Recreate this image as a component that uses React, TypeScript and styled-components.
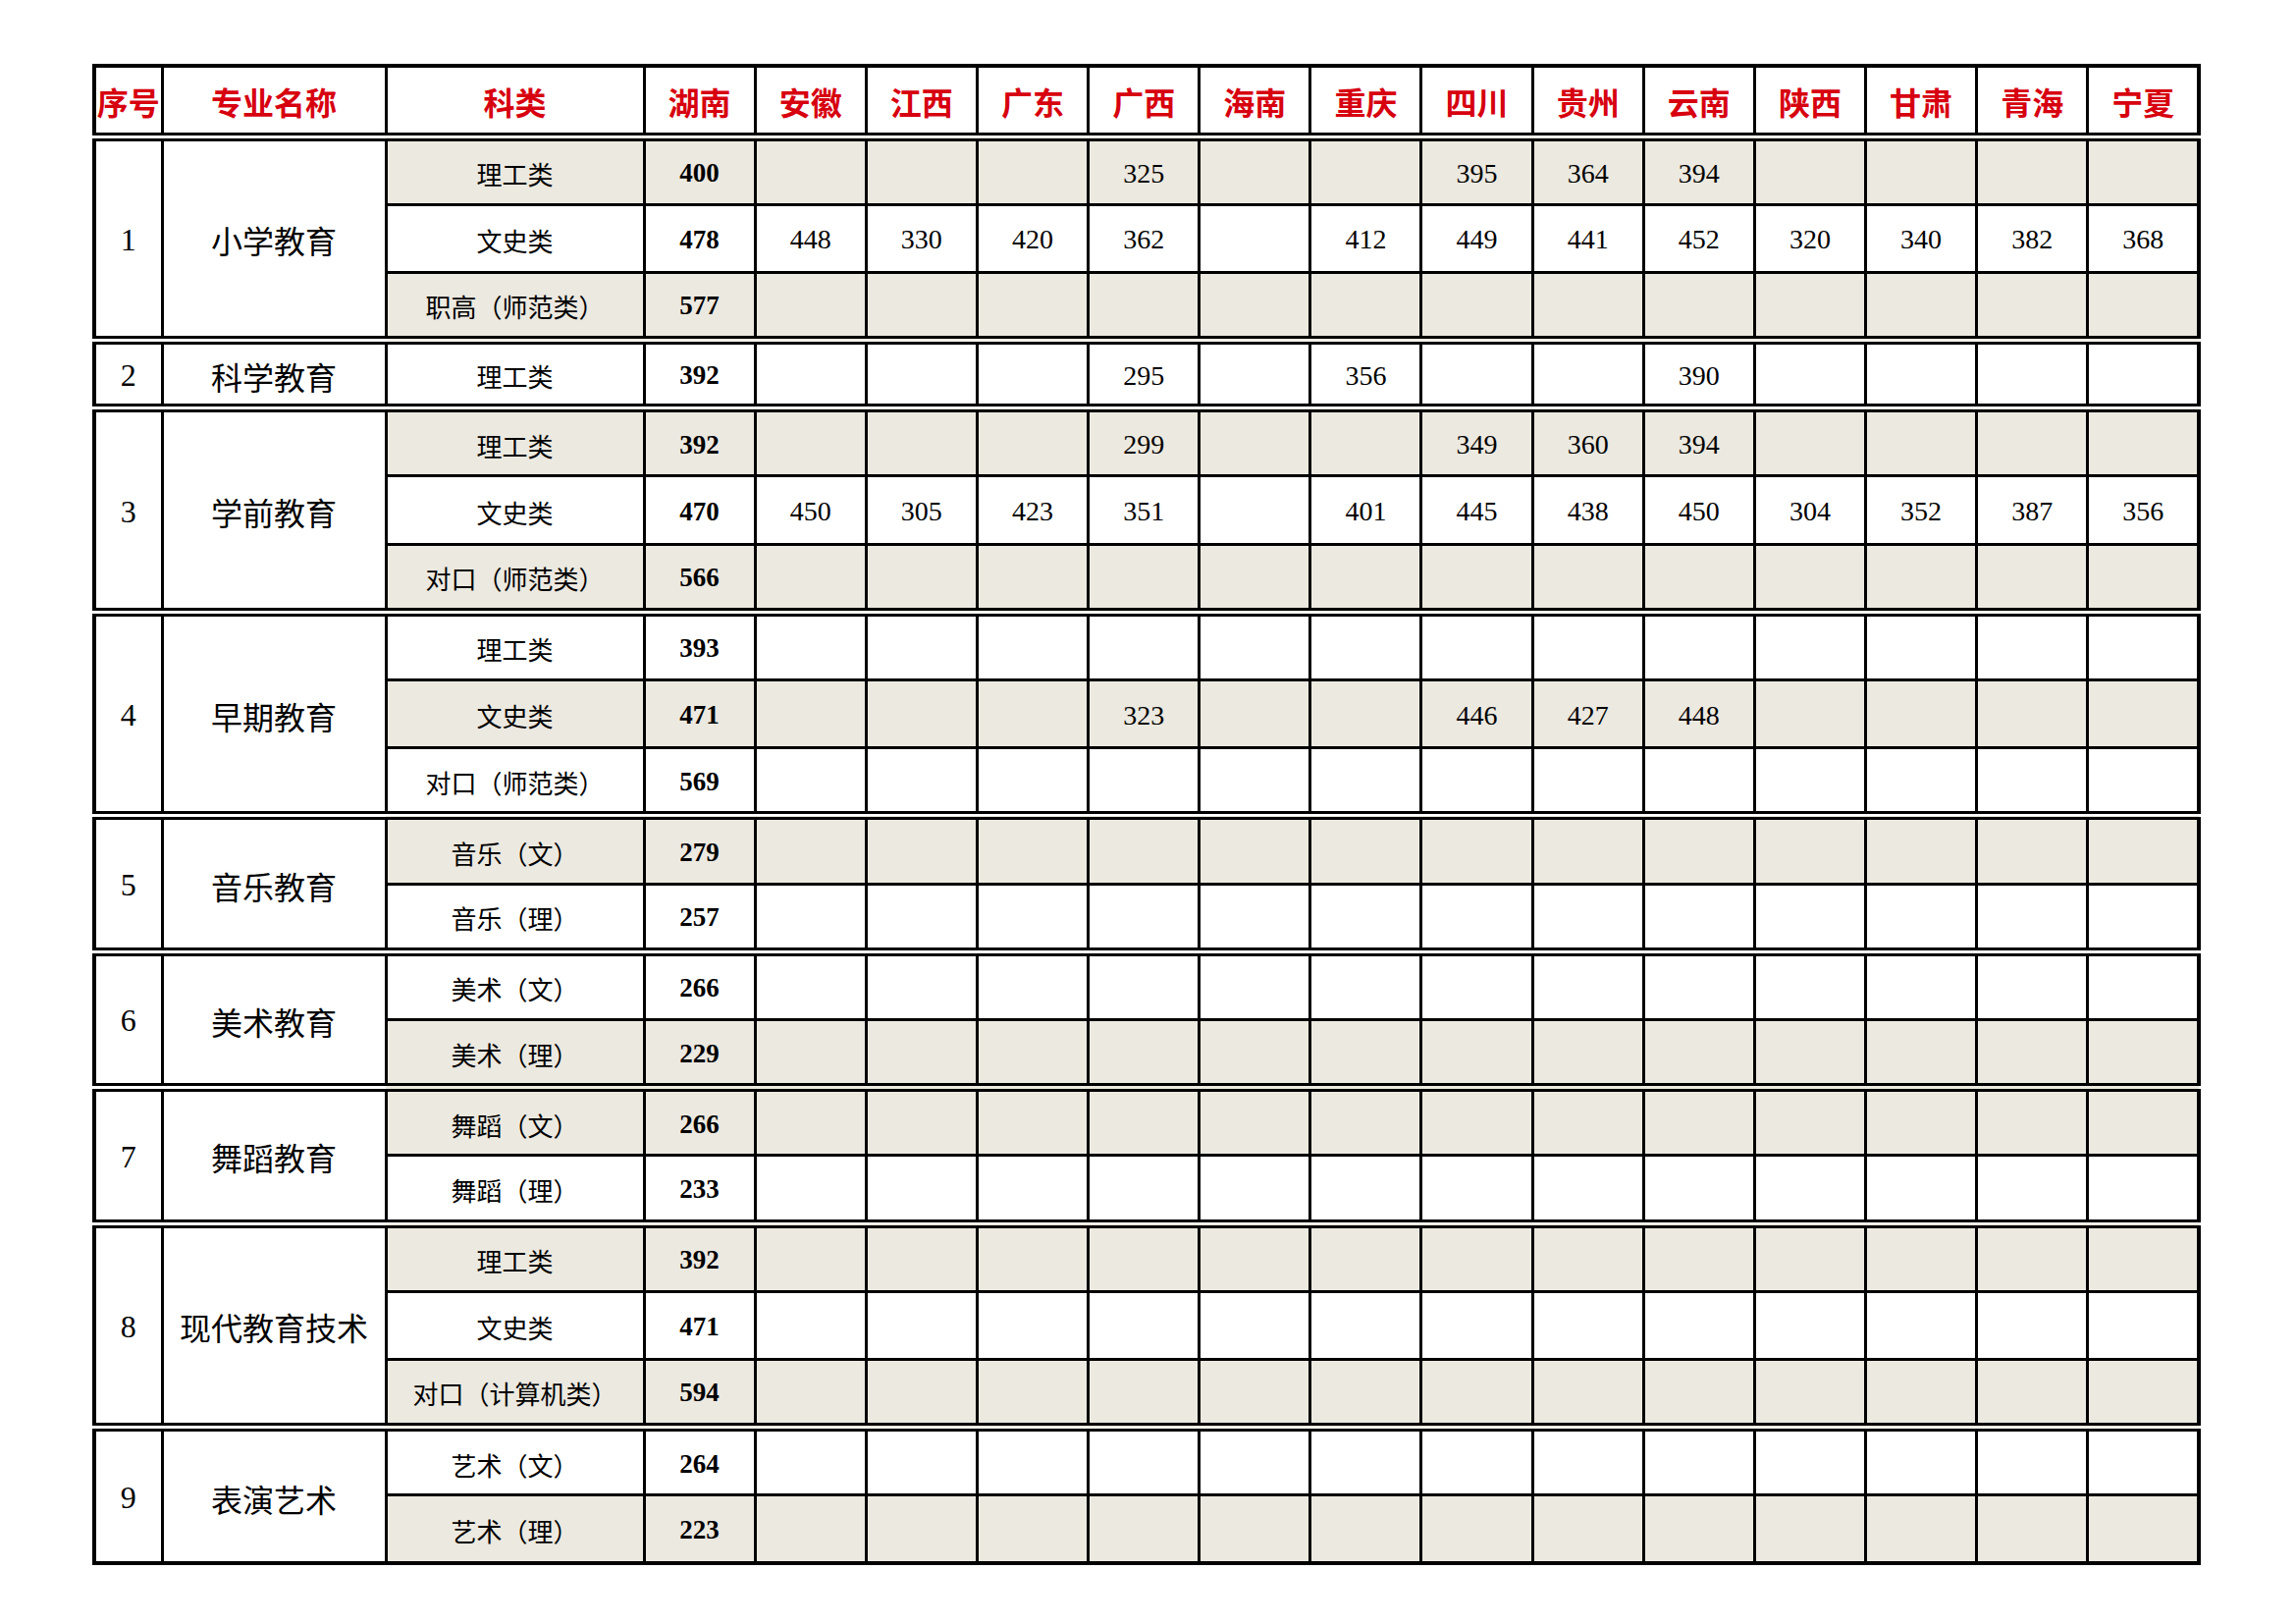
import React from "react";
import styled, { createGlobalStyle } from "styled-components";

const GlobalStyle = createGlobalStyle`
  html, body {
    margin: 0;
    padding: 0;
    background: #ffffff;
  }
`;

const provinces = [
  "湖南", "安徽", "江西", "广东", "广西", "海南", "重庆",
  "四川", "贵州", "云南", "陕西", "甘肃", "青海", "宁夏",
];

interface ScoreRow {
  kind: string;
  scores: string[];
  shaded: boolean;
}

interface Major {
  no: number;
  name: string;
  rows: ScoreRow[];
}

// 只填到有数据的那一列，后面的空格自动补齐
const fill = (values: (string | number)[]) => {
  const out = values.map((v) => (v === "" ? "" : String(v)));
  while (out.length < provinces.length) out.push("");
  return out;
};

const majors: Major[] = [
  {
    no: 1,
    name: "小学教育",
    rows: [
      { kind: "理工类", shaded: true, scores: fill([400, "", "", "", 325, "", "", 395, 364, 394]) },
      { kind: "文史类", shaded: false, scores: fill([478, 448, 330, 420, 362, "", 412, 449, 441, 452, 320, 340, 382, 368]) },
      { kind: "职高（师范类）", shaded: true, scores: fill([577]) },
    ],
  },
  {
    no: 2,
    name: "科学教育",
    rows: [
      { kind: "理工类", shaded: false, scores: fill([392, "", "", "", 295, "", 356, "", "", 390]) },
    ],
  },
  {
    no: 3,
    name: "学前教育",
    rows: [
      { kind: "理工类", shaded: true, scores: fill([392, "", "", "", 299, "", "", 349, 360, 394]) },
      { kind: "文史类", shaded: false, scores: fill([470, 450, 305, 423, 351, "", 401, 445, 438, 450, 304, 352, 387, 356]) },
      { kind: "对口（师范类）", shaded: true, scores: fill([566]) },
    ],
  },
  {
    no: 4,
    name: "早期教育",
    rows: [
      { kind: "理工类", shaded: false, scores: fill([393]) },
      { kind: "文史类", shaded: true, scores: fill([471, "", "", "", 323, "", "", 446, 427, 448]) },
      { kind: "对口（师范类）", shaded: false, scores: fill([569]) },
    ],
  },
  {
    no: 5,
    name: "音乐教育",
    rows: [
      { kind: "音乐（文）", shaded: true, scores: fill([279]) },
      { kind: "音乐（理）", shaded: false, scores: fill([257]) },
    ],
  },
  {
    no: 6,
    name: "美术教育",
    rows: [
      { kind: "美术（文）", shaded: false, scores: fill([266]) },
      { kind: "美术（理）", shaded: true, scores: fill([229]) },
    ],
  },
  {
    no: 7,
    name: "舞蹈教育",
    rows: [
      { kind: "舞蹈（文）", shaded: true, scores: fill([266]) },
      { kind: "舞蹈（理）", shaded: false, scores: fill([233]) },
    ],
  },
  {
    no: 8,
    name: "现代教育技术",
    rows: [
      { kind: "理工类", shaded: true, scores: fill([392]) },
      { kind: "文史类", shaded: false, scores: fill([471]) },
      { kind: "对口（计算机类）", shaded: true, scores: fill([594]) },
    ],
  },
  {
    no: 9,
    name: "表演艺术",
    rows: [
      { kind: "艺术（文）", shaded: false, scores: fill([264]) },
      { kind: "艺术（理）", shaded: true, scores: fill([223]) },
    ],
  },
];

const serif = `"Liberation Serif", "Noto Sans CJK SC", serif`;
const shade = "#ECE9E0";
const line = "3px solid #000";
const doubleLine = "9px double #000";

const TABLE_WIDTH = 2144;
const NO_W = 69;
const NAME_W = 228;
const KIND_W = 263;

const Page = styled.div`
  padding: 65px 0 40px 94px;
`;

const Table = styled.table`
  width: ${TABLE_WIDTH}px;
  table-layout: fixed;
  border-collapse: collapse;
  border: 4px solid #000;
  font-family: ${serif};
  color: #000;
`;

const Col = styled.col<{ $w: number }>`
  width: ${(p) => p.$w}px;
`;

const HeadRow = styled.tr`
  height: 72px;
`;

const HeadCell = styled.th`
  border: ${line};
  border-bottom: ${doubleLine};
  padding: 2px 0 0;
  text-align: center;
  vertical-align: middle;
  white-space: nowrap;
  overflow: visible;
  font-family: "Noto Sans CJK SC", serif;
  font-size: 32px;
  font-weight: 700;
  color: #d7000f;
`;

const BodyRow = styled.tr`
  height: 69.2px;
`;

const Cell = styled.td<{ $top: boolean; $shaded?: boolean }>`
  border: ${line};
  border-top: ${(p) => (p.$top ? doubleLine : line)};
  padding: 3px 0 0;
  text-align: center;
  vertical-align: middle;
  white-space: nowrap;
  background: ${(p) => (p.$shaded ? shade : "#ffffff")};
`;

const NoCell = styled(Cell)`
  font-size: 32px;
`;

const NameCell = styled(Cell)`
  font-size: 32px;
`;

const KindCell = styled(Cell)`
  font-size: 26px;
`;

const ScoreCell = styled(Cell)<{ $bold?: boolean }>`
  font-size: ${(p) => (p.$bold ? "27px" : "28px")};
  font-weight: ${(p) => (p.$bold ? 700 : 400)};
`;

const provinceWidth = (TABLE_WIDTH - NO_W - NAME_W - KIND_W) / provinces.length;

export default function App() {
  return (
    <Page>
      <GlobalStyle />
      <Table>
        <colgroup>
          <Col $w={NO_W} />
          <Col $w={NAME_W} />
          <Col $w={KIND_W} />
          {provinces.map((p) => (
            <Col key={p} $w={provinceWidth} />
          ))}
        </colgroup>
        <thead>
          <HeadRow>
            <HeadCell>序号</HeadCell>
            <HeadCell>专业名称</HeadCell>
            <HeadCell>科类</HeadCell>
            {provinces.map((p) => (
              <HeadCell key={p}>{p}</HeadCell>
            ))}
          </HeadRow>
        </thead>
        <tbody>
          {majors.map((m) =>
            m.rows.map((r, i) => (
              <BodyRow key={`${m.no}-${i}`}>
                {i === 0 && (
                  <>
                    <NoCell $top rowSpan={m.rows.length}>{m.no}</NoCell>
                    <NameCell $top rowSpan={m.rows.length}>{m.name}</NameCell>
                  </>
                )}
                <KindCell $top={i === 0} $shaded={r.shaded}>{r.kind}</KindCell>
                {r.scores.map((s, j) => (
                  <ScoreCell key={j} $top={i === 0} $shaded={r.shaded} $bold={j === 0}>
                    {s}
                  </ScoreCell>
                ))}
              </BodyRow>
            ))
          )}
        </tbody>
      </Table>
    </Page>
  );
}
